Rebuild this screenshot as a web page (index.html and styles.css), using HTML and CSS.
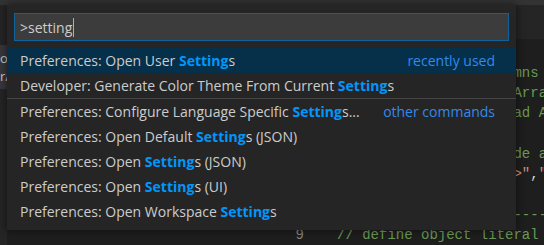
FILE: index.html
```html
<!DOCTYPE html>
<html>
<head>
  <title>Command Palette</title>
  <link rel="stylesheet" href="styles.css">
</head>
<body>
  <div class="workbench">
    <div class="titlebar"></div>
    <div class="main">
      <div class="sidebar">
        <div class="side-head"></div>
        <div class="side-group">
          <div class="side-item">ol</div>
          <div class="side-item">r/</div>
        </div>
      </div>
      <div class="editor">
        <div class="tabs"></div>
        <div class="code">
          <div class="line"><span class="ln">1</span><span class="src"><span class="cm">// resize header columns</span></span></div>
          <div class="line"><span class="ln">2</span><span class="src"><span class="cm">// convert data into Array</span></span></div>
          <div class="line"><span class="ln">3</span><span class="src"><span class="cm">// after the pages load All rows</span></span></div>
          <div class="line"><span class="ln">4</span><span class="src"></span></div>
          <div class="line"><span class="ln">5</span><span class="src"><span class="cm">// put each cell inside a td</span></span></div>
          <div class="line"><span class="ln">6</span><span class="src"><span class="kw">var</span> <span class="var">cellMarks</span> = [<span class="str">"&lt;td&gt;"</span>,<span class="str">"&lt;/td&gt;"</span>];</span></div>
          <div class="line"><span class="ln">7</span><span class="src"></span></div>
          <div class="line"><span class="ln">8</span><span class="src"><span class="cm">//----------------------------------</span></span></div>
          <div class="line"><span class="ln">9</span><span class="src"><span class="cm">// define object literal</span></span></div>
        </div>
      </div>
    </div>

    <div class="quick-input">
      <div class="qi-box"><span class="qi-text">&gt;setting</span><span class="caret"></span></div>
      <div class="qi-list">
        <div class="qi-row selected">
          <span class="label">Preferences: Open User <b class="hl">Setting</b>s</span>
          <span class="desc">recently used</span>
        </div>
        <div class="qi-row">
          <span class="label">Developer: Generate Color Theme From Current <b class="hl">Setting</b>s</span>
        </div>
        <div class="qi-row separated">
          <span class="label">Preferences: Configure Language Specific <b class="hl">Setting</b>s...</span>
          <span class="desc">other commands</span>
        </div>
        <div class="qi-row">
          <span class="label">Preferences: Open Default <b class="hl">Setting</b>s (JSON)</span>
        </div>
        <div class="qi-row">
          <span class="label">Preferences: Open <b class="hl">Setting</b>s (JSON)</span>
        </div>
        <div class="qi-row">
          <span class="label">Preferences: Open <b class="hl">Setting</b>s (UI)</span>
        </div>
        <div class="qi-row">
          <span class="label">Preferences: Open Workspace <b class="hl">Setting</b>s</span>
        </div>
      </div>
    </div>
  </div>
</body>
</html>
```

FILE: styles.css
```css
body {
  margin: 0;
  background-color: #1e1e1e;
  font-family: "Open Sans", "Noto Sans", sans-serif;
  overflow: hidden;
}

.workbench {
  position: relative;
  width: 544px;
  height: 245px;
  overflow: hidden;
}

.titlebar {
  height: 5px;
  background-color: #333333;
}

.main {
  display: flex;
  height: 240px;
}

/* sidebar, mostly hidden behind the palette */
.sidebar {
  flex-shrink: 0;
  width: 7px;
  overflow: hidden;
  background-color: #252526;
}

.side-head {
  height: 40px;
}

.side-group {
  background-color: #37373d;
  padding: 4px 0;
}

.side-item {
  height: 18px;
  line-height: 18px;
  font-size: 13px;
  color: #cccccc;
  white-space: nowrap;
}

.editor {
  flex: 1;
  min-width: 0;
  overflow: hidden;
  display: flex;
  flex-direction: column;
}

.tabs {
  height: 42px;
  background-color: #252526;
}

.code {
  padding: 24px 0 0 249px;
  font-family: "Liberation Mono", "DejaVu Sans Mono", monospace;
  font-size: 14px;
  color: #d4d4d4;
}

.line {
  display: flex;
  height: 20.25px;
  line-height: 20.25px;
  white-space: pre;
}

.ln {
  flex-shrink: 0;
  width: 48px;
  text-align: right;
  color: #858585;
}

.src {
  margin-left: 33px;
}

.cm { color: #6a9955; }
.str { color: #ce9178; }
.kw { color: #569cd6; }
.var { color: #9cdcfe; }

/* command palette */
.quick-input {
  position: absolute;
  left: 7px;
  top: 5px;
  width: 509px;
  padding: 8px 0 6px;
  background-color: #252526;
  box-shadow: 0 0 8px 1px rgba(0, 0, 0, 0.45);
}

.qi-box {
  display: flex;
  align-items: center;
  height: 26px;
  margin: 0 7px 7px;
  padding: 0 5px;
  background-color: #3c3c3c;
  border: 1px solid #0e639c;
  font-size: 14px;
  color: #cccccc;
}

.caret {
  width: 1px;
  height: 19px;
  margin-left: 1px;
  background-color: #aeafad;
}

.qi-row {
  display: flex;
  align-items: center;
  justify-content: space-between;
  height: 25px;
  padding: 0 21px 0 13px;
  font-size: 14px;
  color: #cccccc;
  white-space: nowrap;
}

.qi-row.selected {
  background-color: #062f4a;
}

.qi-row.separated {
  border-top: 1px solid #454545;
}

.hl {
  color: #0097fb;
  font-weight: bold;
}

.desc {
  color: #3794ff;
  opacity: 0.9;
}
```
